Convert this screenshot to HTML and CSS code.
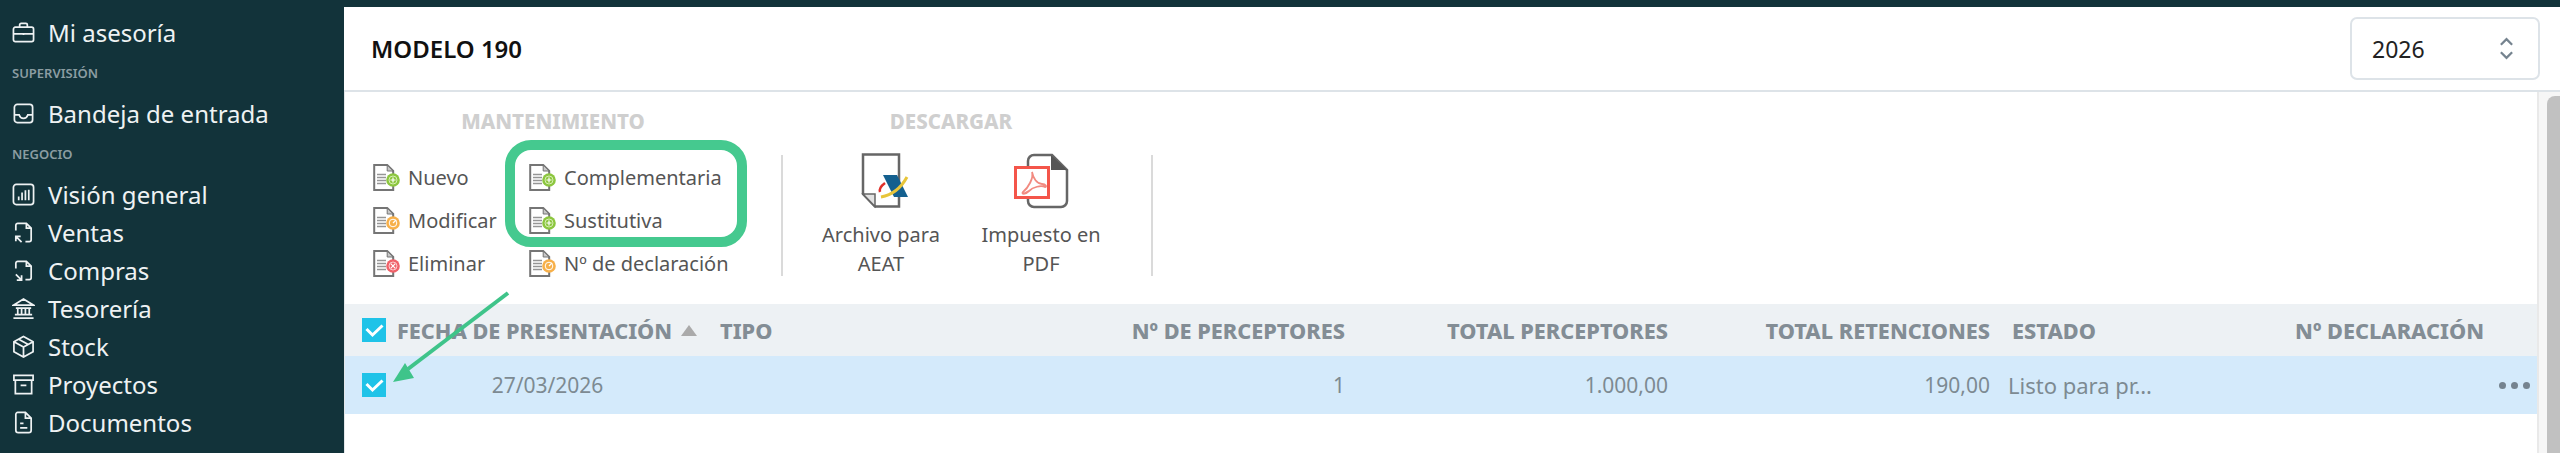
FILE: index.html
```html
<!DOCTYPE html>
<html lang="es">
<head>
    <meta charset="UTF-8">
    <title>Modelo 190</title>
    <link rel="stylesheet" href="styles.css">
</head>
<body>
    <svg class="defs">
        <defs>
            <g id="doc">
                <path d="M1.200 1h13l6 6v19h-19z" fill="#fff" stroke="#757575" stroke-width="2"/>
                <path d="M14.200 1v6h6z" fill="#c8c8c8" stroke="#757575" stroke-width="1"/>
                <path d="M4 10.500h9M4 13.500h9M4 16.500h9M4 19.500h9" stroke="#969696" stroke-width="1.700"/>
            </g>
            <g id="badge-plus">
                <circle cx="20" cy="16" r="6.800" fill="#8cc63f"/>
                <circle cx="20" cy="16" r="4" fill="none" stroke="#d6eeb2" stroke-width="1"/>
                <path d="M17.500 16h5M20 13.500v5" stroke="#fff" stroke-width="1.200"/>
            </g>
            <g id="badge-edit">
                <circle cx="20" cy="16" r="6.800" fill="#f7b04a"/>
                <circle cx="20" cy="16" r="3.800" fill="none" stroke="#fff" stroke-width="1"/>
                <path d="M20 16l3-3" stroke="#fff" stroke-width="1.200"/>
            </g>
            <g id="badge-del">
                <circle cx="20" cy="16" r="6.800" fill="#f0626a"/>
                <circle cx="20" cy="16" r="4" fill="none" stroke="#fbc9cc" stroke-width="1"/>
                <path d="M17.700 13.700l4.600 4.600M22.300 13.700l-4.600 4.600" stroke="#fff" stroke-width="1.200"/>
            </g>
        </defs>
    </svg>
    <div class="app">
        <aside class="sidebar">
            <a class="side-item">
                <svg viewBox="0 0 24 24"><rect x="1.500" y="6.500" width="21" height="15" rx="2"/><path d="M8 6.500V4a1.500 1.500 0 0 1 1.500-1.500h5A1.500 1.500 0 0 1 16 4v2.500M1.500 13.500h21M12 12.500v2"/></svg>
                Mi asesoría
            </a>
            <div class="side-label">SUPERVISIÓN</div>
            <a class="side-item">
                <svg viewBox="0 0 24 24"><rect x="2.500" y="2.500" width="19" height="19" rx="3"/><path d="M2.500 13.500h5c.8 2.400 2.400 3.500 4.500 3.500s3.700-1.100 4.500-3.500h5"/></svg>
                Bandeja de entrada
            </a>
            <div class="side-label">NEGOCIO</div>
            <a class="side-item">
                <svg viewBox="0 0 24 24"><rect x="1.500" y="1.500" width="21" height="21" rx="3"/><path d="M7 18v-4M10.500 18V10M14 18V7.500M17.500 18V7"/></svg>
                Visión general
            </a>
            <a class="side-item">
                <svg viewBox="0 0 24 24"><path d="M4 10V4.500A2 2 0 0 1 6 2.500h9l5 5V19.500a2 2 0 0 1-2 2h-4M15 2.500v5h5M10 22l-6-6M4 21v-5h5"/></svg>
                Ventas
            </a>
            <a class="side-item">
                <svg viewBox="0 0 24 24"><path d="M4 10V4.500A2 2 0 0 1 6 2.500h9l5 5V19.500a2 2 0 0 1-2 2h-4M15 2.500v5h5M4 16l6 6M10 17v5H5"/></svg>
                Compras
            </a>
            <a class="side-item">
                <svg viewBox="0 0 24 24"><path d="M1.500 8.500 12 2l10.500 6.500zM4 11.500h16M6 11.500v7M10 11.500v7M14 11.500v7M18 11.500v7M3 18.500h18M1.500 22h21"/></svg>
                Tesorería
            </a>
            <a class="side-item">
                <svg viewBox="0 0 24 24"><path d="M12 1.500 22 7v10.500L12 23 2 17.500V7zM2 7l10 5.500L22 7M12 12.500V23M7 4.500l10 5.500"/></svg>
                Stock
            </a>
            <a class="side-item">
                <svg viewBox="0 0 24 24"><path d="M2 2.500h20v5H2zM3.500 7.500V21.500h17V7.500M9 13h6"/></svg>
                Proyectos
            </a>
            <a class="side-item">
                <svg viewBox="0 0 24 24"><path d="M6 1.500h8l6 6V20a2.500 2.500 0 0 1-2.500 2.500h-11A2.500 2.500 0 0 1 4 20V3.500a2 2 0 0 1 2-2zM14 1.500v6h6M8.500 13H12M8.500 17.500h7.500"/></svg>
                Documentos
            </a>
        </aside>

        <main class="main">
            <header class="top">
                <h1>MODELO 190</h1>
                <div class="year">
                    2026
                    <svg viewBox="0 0 16 24"><path d="M2 8l6-6 6 6M2 16l6 6 6-6"/></svg>
                </div>
            </header>

            <div class="body">
                <div class="content">
                    <section class="toolbar">
                        <div class="group group-small">
                            <h2>MANTENIMIENTO</h2>
                            <div class="actions">
                                <a class="action"><svg viewBox="0 0 27 27"><use href="#doc"/><use href="#badge-plus"/></svg>Nuevo</a>
                                <a class="action"><svg viewBox="0 0 27 27"><use href="#doc"/><use href="#badge-plus"/></svg>Complementaria</a>
                                <a class="action"><svg viewBox="0 0 27 27"><use href="#doc"/><use href="#badge-edit"/></svg>Modificar</a>
                                <a class="action"><svg viewBox="0 0 27 27"><use href="#doc"/><use href="#badge-plus"/></svg>Sustitutiva</a>
                                <a class="action"><svg viewBox="0 0 27 27"><use href="#doc"/><use href="#badge-del"/></svg>Eliminar</a>
                                <a class="action"><svg viewBox="0 0 27 27"><use href="#doc"/><use href="#badge-edit"/></svg>Nº de declaración</a>
                            </div>
                        </div>
                        <div class="sep"></div>
                        <div class="group group-large">
                            <h2>DESCARGAR</h2>
                            <div class="downloads">
                                <a class="download">
                                    <svg viewBox="0 0 56 56">
                                        <path d="M10 1.500h36v52H22L10 41z" fill="#fff" stroke="#666" stroke-width="2.500"/>
                                        <path d="M10 41h12v12.500z" fill="#e2e2e2" stroke="#666" stroke-width="1.500"/>
                                        <path d="M30 22h14l11 22H41z" fill="#14608f"/>
                                        <path d="M28 44c11-2 20-9 26-20" fill="none" stroke="#e8c53a" stroke-width="3"/>
                                        <path d="M27 39c-1-3 1-6 5-9" fill="none" stroke="#e0302a" stroke-width="2.500"/>
                                    </svg>
                                    Archivo para<br>AEAT
                                </a>
                                <a class="download">
                                    <svg viewBox="0 0 56 56">
                                        <path d="M15 8a6 6 0 0 1 6-6h18l15 15v31a6 6 0 0 1-6 6H21a6 6 0 0 1-6-6z" fill="#fff" stroke="#666" stroke-width="2.500"/>
                                        <path d="M38 2l16 15H38z" fill="#555"/>
                                        <rect x="2.500" y="14.500" width="33" height="30" fill="#fff" stroke="#f4554a" stroke-width="3"/>
                                        <path d="M19 19c2 6-4 16-9 20-2 2 2 3 6-1 4-4 12-6 16-4 2 0 1-3-3-3-5 0-9-6-10-12z" fill="none" stroke="#f28a80" stroke-width="1.800"/>
                                    </svg>
                                    Impuesto en<br>PDF
                                </a>
                            </div>
                        </div>
                        <div class="sep sep-last"></div>
                    </section>

                    <section class="table">
                        <div class="row row-head">
                            <span class="check"><svg viewBox="0 0 24 24"><path d="M4.500 11l6 6 10-9.500"/></svg></span>
                            <span class="cell head-date">FECHA DE PRESENTACIÓN<i class="sort"></i></span>
                            <span class="cell">TIPO</span>
                            <span class="cell num">Nº DE PERCEPTORES</span>
                            <span class="cell num">TOTAL PERCEPTORES</span>
                            <span class="cell num">TOTAL RETENCIONES</span>
                            <span class="cell status-head">ESTADO</span>
                            <span class="cell num">Nº DECLARACIÓN</span>
                            <span class="cell"></span>
                        </div>
                        <div class="row row-data">
                            <span class="check"><svg viewBox="0 0 24 24"><path d="M4.500 11l6 6 10-9.500"/></svg></span>
                            <span class="cell date">27/03/2026</span>
                            <span class="cell"></span>
                            <span class="cell num">1</span>
                            <span class="cell num">1.000,00</span>
                            <span class="cell num">190,00</span>
                            <span class="cell status">Listo para pr…</span>
                            <span class="cell"></span>
                            <span class="cell more"><i></i><i></i><i></i></span>
                        </div>
                    </section>
                </div>
                <div class="scrollbar"><div class="thumb"></div></div>
            </div>
        </main>
    </div>

    <!-- annotations drawn on top of the screenshot -->
    <svg class="annot" viewBox="0 0 2560 453">
        <rect x="510" y="145" width="232" height="97" rx="21" fill="none" stroke="#45c98f" stroke-width="10"/>
        <path d="M508 293 408 369" stroke="#3fc48a" stroke-width="4" fill="none"/>
        <path d="M393 382 405 363 414 378z" fill="#3fc48a"/>
    </svg>
</body>
</html>
```

FILE: styles.css
```css
* {
    margin: 0;
    padding: 0;
    box-sizing: border-box;
}
html, body {
    height: 453px;
    overflow: hidden;
}
body {
    position: relative;
    background-color: #12333a;
    font-family: "Noto Sans", sans-serif;
    padding-top: 7px;
}
.defs {
    display: none;
}
.annot {
    position: absolute;
    top: 0;
    left: 0;
    width: 2560px;
    height: 453px;
    pointer-events: none;
}
.app {
    display: flex;
    height: 446px;
}

/* sidebar */
.sidebar {
    flex: 0 0 344px;
    padding: 6px 0 0 12px;
    color: #eef2f3;
}
.side-item {
    display: flex;
    align-items: center;
    gap: 13px;
    height: 38.1px;
    font-size: 24px;
}
.side-item svg {
    width: 23px;
    height: 23px;
    fill: none;
    stroke: #eef2f3;
    stroke-width: 1.8;
}
.side-label {
    height: 43px;
    padding-top: 12px;
    font-size: 13px;
    line-height: 20px;
    font-weight: 600;
    color: #8b9da2;
}

/* main */
.main {
    flex: 1;
    display: flex;
    flex-direction: column;
    background-color: #fff;
}
.top {
    flex: 0 0 85px;
    display: flex;
    align-items: center;
    justify-content: space-between;
    padding: 0 20px 0 27px;
    border-bottom: 2px solid #dde3e8;
}
.top h1 {
    font-size: 24px;
    font-weight: 600;
    color: #111;
}
.year {
    width: 190px;
    height: 63px;
    display: flex;
    align-items: center;
    justify-content: space-between;
    padding: 0 24px 0 20px;
    border: 2px solid #dde3e8;
    border-radius: 7px;
    font-size: 23px;
    color: #222;
}
.year svg {
    width: 15px;
    height: 27px;
    fill: none;
    stroke: #75838f;
    stroke-width: 2.4;
}
.body {
    flex: 1;
    display: flex;
    min-height: 0;
}
.content {
    flex: 1;
    min-width: 0;
    overflow: hidden;
    border-left: 1px solid #e3e7ea;
}
.scrollbar {
    flex: 0 0 23px;
    padding: 4px 0 0 8px;
    background-color: #f6f6f6;
    border-left: 2px solid #e9e9e9;
}
.thumb {
    height: 100%;
    background-color: #c1c1c1;
    border-radius: 8px 0 0 0;
}

/* toolbar */
.toolbar {
    display: flex;
    height: 212px;
    padding-left: 28px;
}
.group h2 {
    height: 64px;
    padding-top: 16px;
    font-size: 20.5px;
    line-height: 26px;
    font-weight: 800;
    color: #cfcfcf;
    text-align: center;
}
.group-small {
    width: 408px;
}
.group-small h2 {
    padding-right: 48px;
}
.group-large h2 {
    padding-right: 20px;
}
.actions {
    display: grid;
    grid-template-columns: 156px 1fr;
    grid-auto-rows: 43px;
}
.action {
    display: flex;
    align-items: center;
    gap: 8px;
    font-size: 20px;
    color: #555;
    white-space: nowrap;
}
.action svg {
    width: 27px;
    height: 27px;
}
.sep {
    flex: 0 0 2px;
    height: 121px;
    margin-top: 63px;
    background-color: #dadada;
}
.group-large {
    width: 320px;
    margin-left: 18px;
}
.sep-last {
    margin-left: 30px;
}
.downloads {
    display: flex;
    margin-top: -3px;
}
.download {
    width: 160px;
    font-size: 20px;
    line-height: 29px;
    color: #555;
    text-align: center;
}
.download svg {
    display: block;
    width: 56px;
    height: 56px;
    margin: 0 auto 11px;
}

/* table */
.row {
    display: grid;
    grid-template-columns: 50px 305px 300px 345px 323px 322px 296px 198px 49px;
    align-items: center;
}
.row-head {
    height: 52px;
    background-color: #edf1f4;
    font-size: 21.7px;
    font-weight: 800;
    color: #838d95;
}
.row-data {
    height: 58px;
    background-color: #d4eafb;
    font-size: 21px;
    color: #7d8a92;
}
.check {
    display: flex;
    width: 24px;
    height: 24px;
    margin-left: 17px;
    background-color: #1fc3e8;
}
.check svg {
    fill: none;
    stroke: #fff;
    stroke-width: 3;
}
.cell {
    white-space: nowrap;
}
.row .cell:nth-child(3) {
    padding-left: 20px;
}
.num {
    text-align: right;
}
.head-date {
    display: flex;
    align-items: center;
    padding-left: 2px;
}
.sort {
    width: 0;
    height: 0;
    margin-left: 9px;
    border-left: 8px solid transparent;
    border-right: 8px solid transparent;
    border-bottom: 11px solid #aaa;
}
.date {
    text-align: center;
}
.status-head {
    padding-left: 22px;
}
.status {
    padding-left: 18px;
    font-size: 22px;
}
.more {
    display: flex;
    gap: 5px;
    padding-left: 15px;
    overflow: hidden;
}
.more i {
    flex: 0 0 7px;
    height: 7px;
    border-radius: 50%;
    background-color: #75838f;
}
```
